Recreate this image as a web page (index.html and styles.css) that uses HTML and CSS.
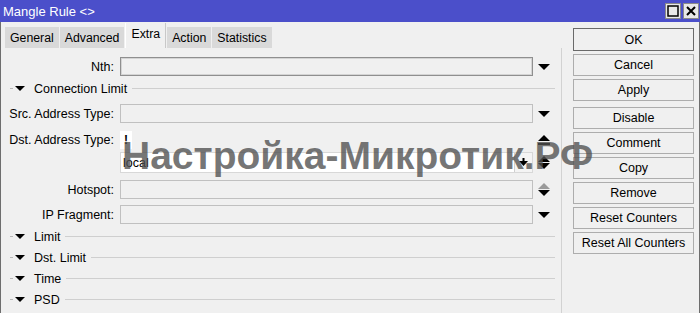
FILE: index.html
```html
<!DOCTYPE html>
<html>
<head>
<meta charset="utf-8">
<link rel="stylesheet" href="styles.css">
</head>
<body>
<div class="window">
  <div class="titlebar">
    <span class="title">Mangle Rule &lt;&gt;</span>
    <div class="tb-btns">
      <span class="tb-btn"><svg width="14" height="14" viewBox="0 0 14 14"><rect x="2" y="2" width="10" height="10" fill="none" stroke="#000" stroke-width="1.5"/></svg></span>
      <span class="tb-btn"><svg width="14" height="14" viewBox="0 0 14 14"><path d="M3 3 L11 11 M11 3 L3 11" stroke="#000" stroke-width="2"/></svg></span>
    </div>
  </div>
  <div class="body">
    <div class="main">
      <div class="tabs">
        <span class="tab">General</span>
        <span class="tab">Advanced</span>
        <span class="tab active">Extra</span>
        <span class="tab">Action</span>
        <span class="tab">Statistics</span>
      </div>
      <div class="panel">
        <div class="row r-nth">
          <label class="lbl">Nth:</label>
          <div class="input dark"></div>
          <span class="arrow"><svg width="12" height="6" viewBox="0 0 12 6"><path d="M0 0 H12 L6 6 Z" fill="#000"/></svg></span>
        </div>
        <div class="section s-cl"><span class="dash"></span><svg class="tri" width="10" height="5" viewBox="0 0 10 5"><path d="M0 0 H10 L5 5 Z" fill="#000"/></svg><span class="stext">Connection Limit</span><span class="sline"></span></div>
        <div class="row r-src">
          <label class="lbl">Src. Address Type:</label>
          <div class="input"></div>
          <span class="arrow"><svg width="12" height="6" viewBox="0 0 12 6"><path d="M0 0 H12 L6 6 Z" fill="#000"/></svg></span>
        </div>
        <div class="row r-dst">
          <label class="lbl">Dst. Address Type:</label>
          <div class="fieldwrap"><span class="bang">!</span></div>
          <span class="arrow"><svg width="12" height="10" viewBox="0 0 12 10"><path d="M0 6 H12 L6 0 Z" fill="#000"/><rect x="0" y="8" width="12" height="2" fill="#000"/></svg></span>
        </div>
        <div class="row r-local">
          <label class="lbl"></label>
          <div class="input white"><span class="val">local</span><span class="selbtn"><svg width="9" height="9" viewBox="0 0 9 9"><path d="M0 3 H9 L4.5 8 Z" fill="#000"/><rect x="3.5" y="0" width="2" height="3" fill="#000"/></svg></span></div>
          <span class="arrow"><svg width="12" height="13" viewBox="0 0 12 13"><path d="M0 6 H12 L6 0 Z" fill="#000"/><path d="M0 7 H12 L6 13 Z" fill="#000"/></svg></span>
        </div>
        <div class="row r-hot">
          <label class="lbl">Hotspot:</label>
          <div class="input"></div>
          <span class="arrow"><svg width="12" height="13" viewBox="0 0 12 13"><path d="M0 6 H12 L6 0 Z" fill="#9a9a9a"/><path d="M0 7 H12 L6 13 Z" fill="#000"/></svg></span>
        </div>
        <div class="row r-ipf">
          <label class="lbl">IP Fragment:</label>
          <div class="input"></div>
          <span class="arrow"><svg width="12" height="6" viewBox="0 0 12 6"><path d="M0 0 H12 L6 6 Z" fill="#000"/></svg></span>
        </div>
        <div class="section s-limit"><span class="dash"></span><svg class="tri" width="10" height="5" viewBox="0 0 10 5"><path d="M0 0 H10 L5 5 Z" fill="#000"/></svg><span class="stext">Limit</span><span class="sline"></span></div>
        <div class="section"><span class="dash"></span><svg class="tri" width="10" height="5" viewBox="0 0 10 5"><path d="M0 0 H10 L5 5 Z" fill="#000"/></svg><span class="stext">Dst. Limit</span><span class="sline"></span></div>
        <div class="section"><span class="dash"></span><svg class="tri" width="10" height="5" viewBox="0 0 10 5"><path d="M0 0 H10 L5 5 Z" fill="#000"/></svg><span class="stext">Time</span><span class="sline"></span></div>
        <div class="section"><span class="dash"></span><svg class="tri" width="10" height="5" viewBox="0 0 10 5"><path d="M0 0 H10 L5 5 Z" fill="#000"/></svg><span class="stext">PSD</span><span class="sline"></span></div>
      </div>
    </div>
    <div class="vsep"></div>
    <div class="buttons">
      <button class="btn default">OK</button>
      <button class="btn">Cancel</button>
      <button class="btn">Apply</button>
      <button class="btn gap">Disable</button>
      <button class="btn">Comment</button>
      <button class="btn">Copy</button>
      <button class="btn">Remove</button>
      <button class="btn">Reset Counters</button>
      <button class="btn">Reset All Counters</button>
    </div>
  </div>
  <div class="watermark">Настройка-Микротик.РФ</div>
</div>
</body>
</html>
```
FILE: styles.css
```css
* { box-sizing: border-box; }
html, body { margin: 0; padding: 0; }
body {
  width: 700px; height: 313px; overflow: hidden;
  font-family: "Liberation Sans", Arial, sans-serif;
  font-size: 12.5px; color: #000;
  background: #f0f0f0;
}
.window {
  position: relative;
  width: 700px; height: 313px;
  background: #f0f0f0;
  border-left: 1px solid #6e6e6e;
  border-right: 1px solid #6e6e6e;
  display: flex; flex-direction: column;
}
.titlebar {
  height: 22px; flex: none;
  background: #4b4fca;
  display: flex; align-items: center; justify-content: space-between;
  padding: 0 1px 0 3px;
  margin-left: -1px; margin-right: -1px;
}
.title { color: #fff; font-size: 13px; }
.tb-btns { display: flex; gap: 2px; }
.tb-btn {
  width: 16px; height: 16px; background: #e8e8e8;
  border: 1px solid #8a8a8a;
  display: flex; align-items: center; justify-content: center;
}
.body { flex: 1; display: flex; }
.main { width: 559px; flex: none; display: flex; flex-direction: column; }
.tabs { display: flex; height: 26px; padding-left: 4px; align-items: flex-end; font-size: 12.3px; }
.tab {
  height: 21px; padding: 0 5px;
  background: #d9d9d9;
  border-right: 1px solid #f0f0f0;
  display: flex; align-items: center;
  padding-top: 1px;
}
.tab.active {
  height: 25px; background: #f0f0f0;
  border-left: 1px solid #fff; border-right: 1px solid #c8c8c8;
  padding: 0 5px 4px;
  margin-right: 1px;
}
.panel { display: flex; flex-direction: column; }
.row { display: flex; align-items: center; }
.lbl { width: 115px; flex: none; text-align: right; padding-right: 2px; }
.input {
  width: 413px; height: 19px; margin-left: 4px;
  border: 1px solid #c0c0c0; background: #f0f0f0;
  position: relative; display: flex; align-items: center;
}
.input.dark { border: 1px solid #8f8f8f; box-shadow: inset 0 0 0 1px #d4d4d4; }
.input.white { background: #fff; height: 21px; border-color: #d8d8d8; }
.val { padding-left: 2px; }
.selbtn {
  position: absolute; right: 0; top: 0; bottom: 0; width: 18px;
  border-left: 1px solid #d0d0d0; background: #f4f4f4;
  display: flex; align-items: center; justify-content: center;
}
.fieldwrap { width: 413px; margin-left: 4px; height: 18px; }
.bang {
  display: flex; width: 12px; height: 18px; background: #fff;
  align-items: center; justify-content: center; font-weight: bold; font-size: 12px;
}
.arrow { width: 12px; margin-left: 5px; display: flex; align-items: center; justify-content: center; }
.r-nth { margin-top: 9px; height: 19px; }
.s-cl { margin-top: 2px; }
.r-src { margin-top: 5px; height: 19px; }
.r-dst { margin-top: 8px; height: 18px; }
.r-local { margin-top: 3px; height: 21px; }
.r-hot { margin-top: 7px; height: 19px; }
.r-ipf { margin-top: 6px; height: 19px; }
.s-limit { margin-top: 2px; }
.section { height: 21px; display: flex; align-items: center; padding-left: 9px; }
.dash { width: 3px; height: 1px; background: #b8b8b8; margin-right: 2px; }
.tri { flex: none; }
.stext { margin-left: 9px; }
.sline { width: 0; flex: 1; height: 1px; background: #cfcfcf; margin-left: 5px; margin-right: 5px; }
.vsep { width: 1px; background: #d2d2d2; margin-top: 26px; margin-left: 1px; }
.buttons {
  display: flex; flex-direction: column; gap: 3px;
  padding-top: 6px; margin-left: 11px;
}
.btn {
  width: 121px; height: 22px;
  font-family: "Liberation Sans", Arial, sans-serif; font-size: 12.5px; color: #000;
  background: #f0f0f0; border: 1px solid #adadad; padding: 0;
}
.btn.default { border: 1px solid #6a6a6a; height: 23px; }
.btn.gap { margin-top: 3px; }
.watermark {
  position: absolute; left: 121px; top: 134px;
  font-family: "Liberation Sans", Arial, sans-serif; font-weight: bold;
  font-size: 39px; color: rgba(80, 80, 80, 0.78);
  white-space: nowrap; letter-spacing: 0px;
}
```
